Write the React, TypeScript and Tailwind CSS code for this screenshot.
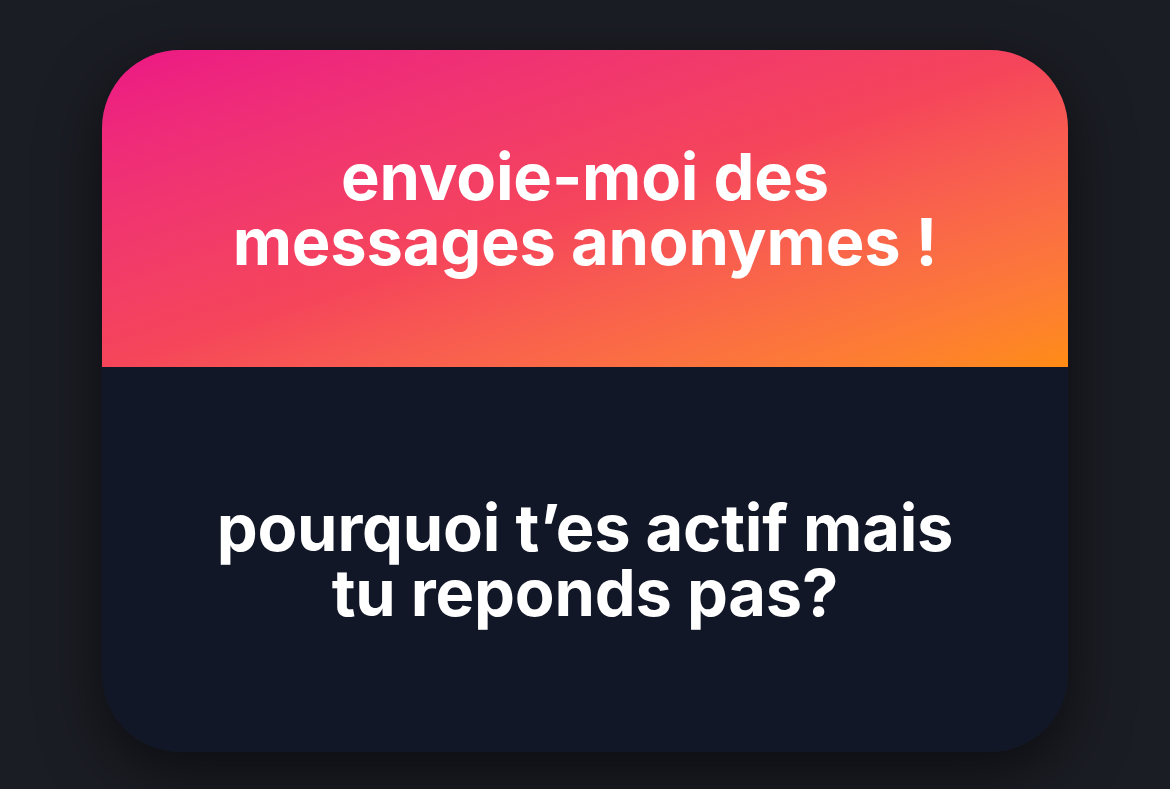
export default function App() {
  return (
    <div className="min-h-screen w-full bg-[#1b1d24] flex items-start justify-center pt-[50px]" style={{ fontFamily: "Inter, 'Noto Sans', sans-serif" }}>
      <div className="w-[966px] h-[702px] rounded-[78px] overflow-hidden flex flex-col shadow-[0_20px_60px_rgba(0,0,0,0.55)]">
        <div className="h-[317px] flex items-center justify-center bg-gradient-to-br from-[#ec1685] via-[#f5455a] to-[#ff8c12]">
          <h1 className="text-white text-[65px] leading-[65px] font-bold text-center tracking-[-0.2px]">
            envoie-moi des
            <br />
            messages anonymes !
          </h1>
        </div>
        <div className="flex-1 bg-[#111726] flex items-center justify-center">
          <p className="text-white text-[65px] leading-[65px] font-bold text-center tracking-[-0.2px]">
            pourquoi t’es actif mais
            <br />
            tu reponds pas?
          </p>
        </div>
      </div>
    </div>
  );
}
